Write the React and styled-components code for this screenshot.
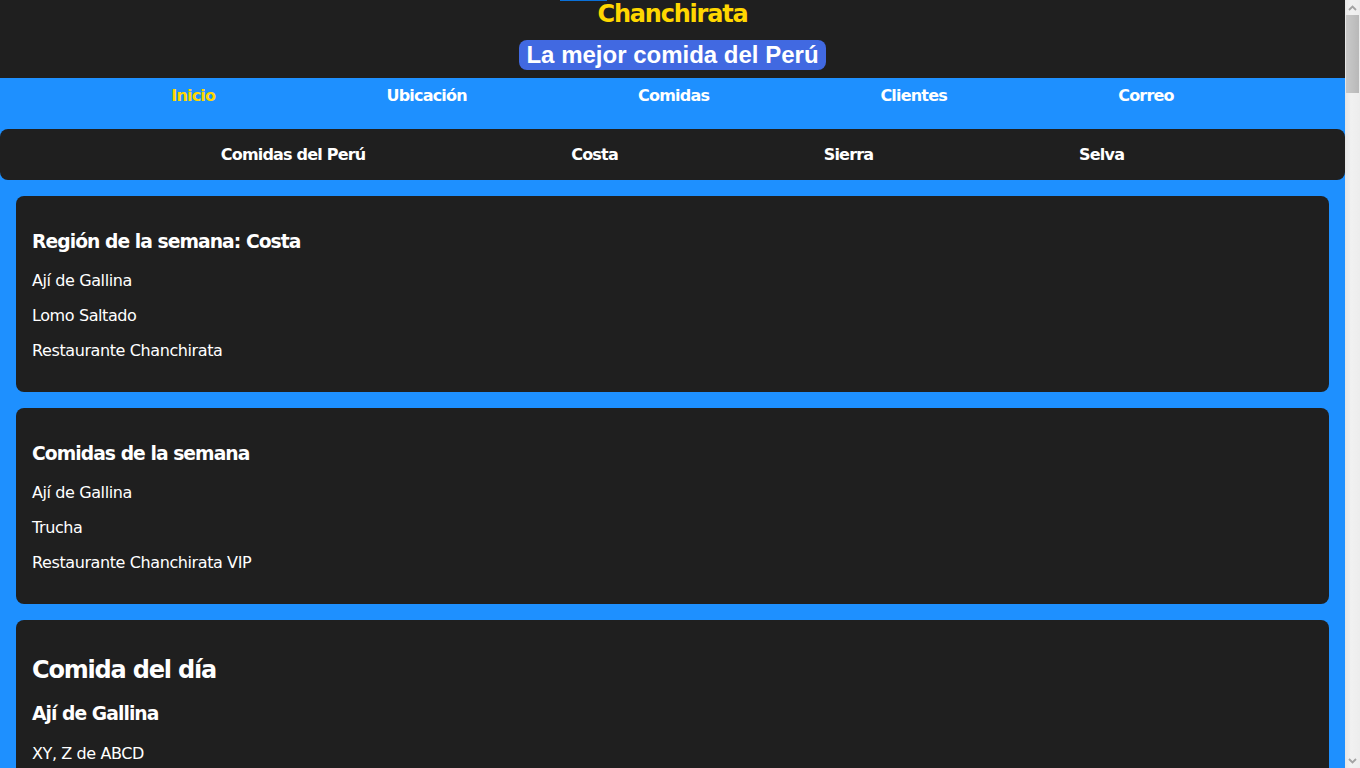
import React from "react";
import styled, { createGlobalStyle } from "styled-components";

const GlobalStyle = createGlobalStyle`
  html, body {
    margin: 0;
    padding: 0;
  }
  body {
    background: #1e90ff;
    font-family: 'DejaVu Sans', Verdana, sans-serif;
    letter-spacing: -0.025em;
    color: #ffffff;
  }
`;

const Page = styled.div`
  margin-right: 15px;
`;

const ScrollTrack = styled.div`
  position: fixed;
  top: 0;
  right: 0;
  width: 15px;
  height: 100vh;
  background: linear-gradient(to right, #e6e6e6, #f1f1f1 40%, #ededed);
  display: flex;
  flex-direction: column;
  z-index: 10;
`;

const ScrollButton = styled.div`
  height: 15px;
  display: flex;
  align-items: center;
  justify-content: center;
  flex: none;
`;

const ScrollThumb = styled.div`
  height: 78px;
  margin: 0 1px;
  background: linear-gradient(to right, #c8c8c8, #c1c1c1 50%, #b8b8b8);
  flex: none;
`;

const ScrollRest = styled.div`
  flex: 1;
`;

const Header = styled.header`
  position: relative;
  background: #1f1f1f;
  display: flex;
  flex-direction: column;
  align-items: center;
  padding: 0 0 8px;
`;

const TopLine = styled.span`
  position: absolute;
  top: 0;
  left: 560px;
  width: 47px;
  height: 1px;
  background: #0a70d8;
`;

const Title = styled.h1`
  margin: 0;
  font-size: 24px;
  line-height: 28px;
  color: #ffd700;
  font-weight: bold;
  letter-spacing: -0.05em;
`;

const Badge = styled.h2`
  margin: 12px 0 0;
  font-family: 'Liberation Sans', Arial, sans-serif;
  font-size: 24px;
  line-height: 28px;
  font-weight: bold;
  letter-spacing: normal;
  color: #ffffff;
  background: #4169e1;
  padding: 1px 7px;
  border-radius: 8px;
`;

const MainNav = styled.nav`
  display: flex;
  justify-content: space-evenly;
  padding: 8px 0;
`;

const NavLink = styled.a`
  color: ${(p) => (p.$active ? "#ffd700" : "#ffffff")};
  font-weight: bold;
  font-size: 16px;
  letter-spacing: -0.05em;
  text-decoration: none;
`;

const SubNav = styled.nav`
  margin-top: 16px;
  background: #1f1f1f;
  border-radius: 8px;
  display: flex;
  justify-content: space-evenly;
  padding: 16px 15px;
`;

const Main = styled.main`
  display: flex;
  flex-direction: column;
  gap: 16px;
  padding: 16px;
`;

const Card = styled.section`
  background: #1f1f1f;
  border-radius: 8px;
  padding: 16px;
`;

const CardTitle = styled.h3`
  font-size: 1.17em;
  line-height: 1.1;
  margin: 1.05em 0 1em;
  font-weight: bold;
  letter-spacing: -0.05em;
`;

const BigTitle = styled.h2`
  font-size: 1.5em;
  line-height: 1.2;
  margin: 0.83em 0;
  font-weight: bold;
  letter-spacing: -0.05em;
`;

const Item = styled.p`
  margin: 1em 0;
  font-size: 16px;
`;

const Chevron = ({ down }) => (
  <svg width="9" height="6" viewBox="0 0 9 6">
    <path
      d={down ? "M1 1 L4.5 4.5 L8 1" : "M1 5 L4.5 1.5 L8 5"}
      fill="none"
      stroke="#a3a3a3"
      strokeWidth="1.8"
    />
  </svg>
);

const mainLinks = ["Inicio", "Ubicación", "Comidas", "Clientes", "Correo"];
const subLinks = ["Comidas del Perú", "Costa", "Sierra", "Selva"];

const moreDishes = [
  ["Ceviche", "Pescado fresco con limón", "Restaurante Chanchirata"],
  ["Pachamanca", "Carnes cocidas bajo tierra", "Restaurante Chanchirata"],
  ["Juane", "Arroz con gallina en hoja de bijao", "Restaurante Chanchirata"],
];

export default function App() {
  return (
    <>
      <GlobalStyle />
      <ScrollTrack>
        <ScrollButton>
          <Chevron />
        </ScrollButton>
        <ScrollThumb />
        <ScrollRest />
        <ScrollButton>
          <Chevron down />
        </ScrollButton>
      </ScrollTrack>
      <Page>
        <Header>
          <TopLine />
          <Title>Chanchirata</Title>
          <Badge>La mejor comida del Perú</Badge>
        </Header>
        <MainNav>
          {mainLinks.map((l, i) => (
            <NavLink key={l} href="#" $active={i === 0}>
              {l}
            </NavLink>
          ))}
        </MainNav>
        <SubNav>
          {subLinks.map((l) => (
            <NavLink key={l} href="#">
              {l}
            </NavLink>
          ))}
        </SubNav>
        <Main>
          <Card>
            <CardTitle>Región de la semana: Costa</CardTitle>
            <Item>Ají de Gallina</Item>
            <Item>Lomo Saltado</Item>
            <Item>Restaurante Chanchirata</Item>
          </Card>
          <Card>
            <CardTitle>Comidas de la semana</CardTitle>
            <Item>Ají de Gallina</Item>
            <Item>Trucha</Item>
            <Item>Restaurante Chanchirata VIP</Item>
          </Card>
          <Card>
            <BigTitle>Comida del día</BigTitle>
            <CardTitle>Ají de Gallina</CardTitle>
            <Item>XY, Z de ABCD</Item>
            <Item>Restaurante Chanchirata</Item>
          </Card>
          {moreDishes.map(([name, desc, place]) => (
            <Card key={name}>
              <CardTitle>{name}</CardTitle>
              <Item>{desc}</Item>
              <Item>{place}</Item>
            </Card>
          ))}
        </Main>
      </Page>
    </>
  );
}
